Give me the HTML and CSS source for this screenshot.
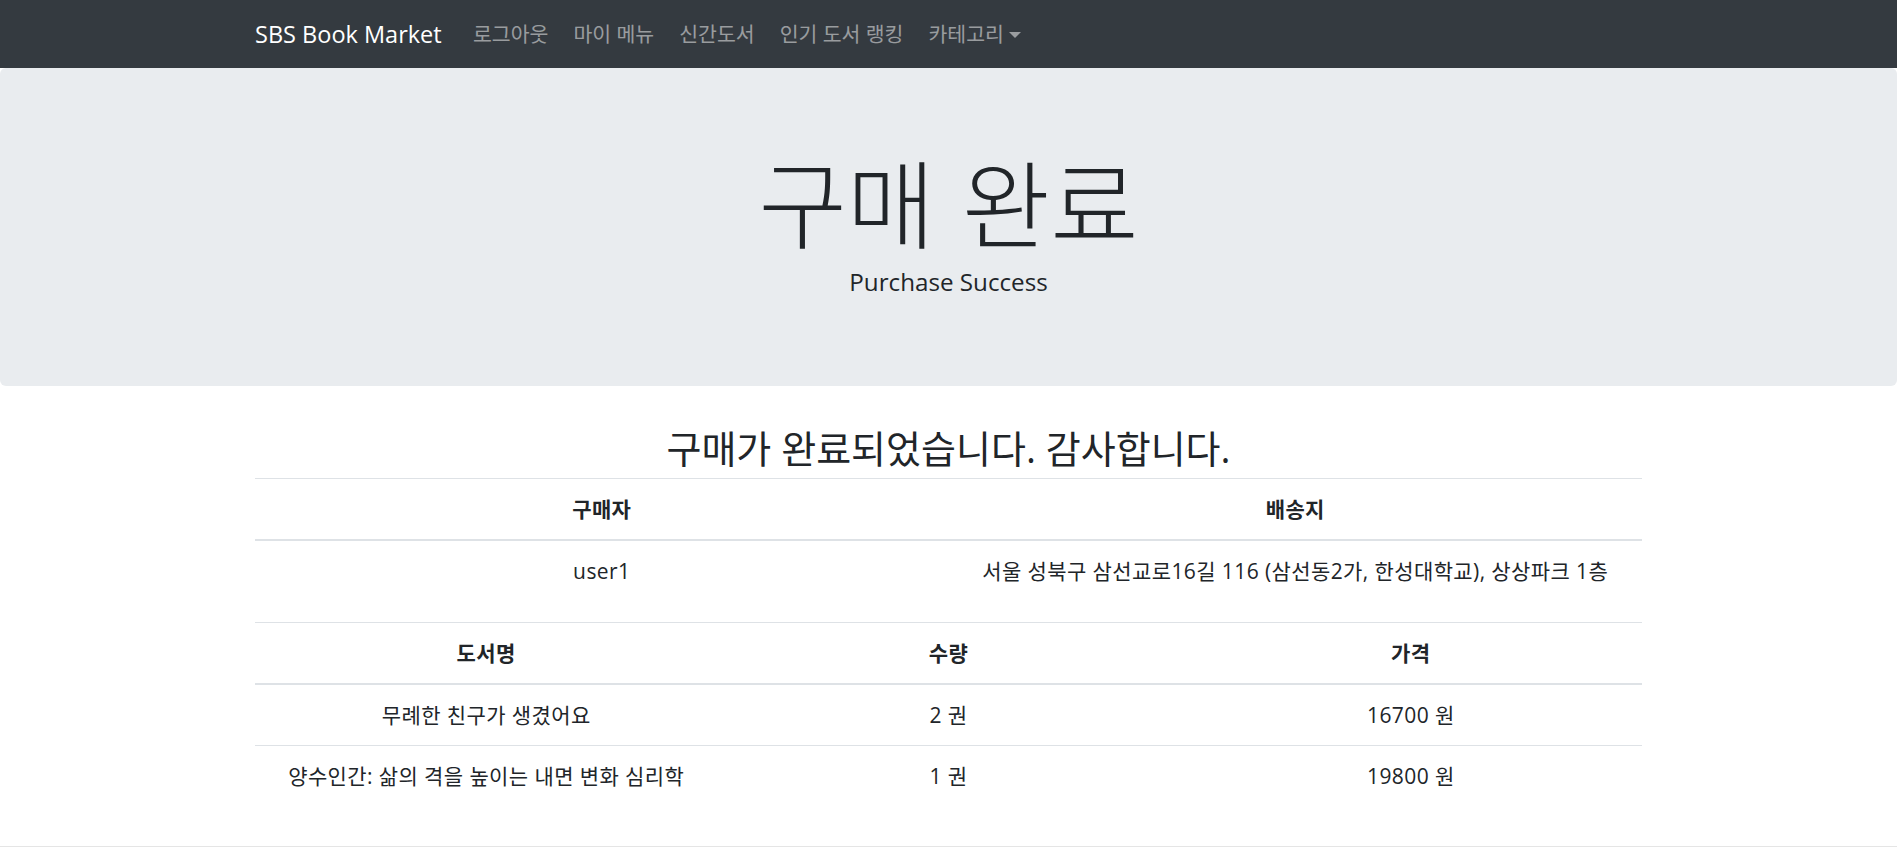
FILE: index.html
```html
<!DOCTYPE html>
<html lang="ko">
<head>
<meta charset="utf-8">
<title>구매 완료</title>
<link rel="stylesheet" href="styles.css">
</head>
<body>
<nav class="navbar">
  <div class="container nav-inner">
    <a class="brand" href="#">SBS Book Market</a>
    <ul class="nav-links">
      <li><a href="#">로그아웃</a></li>
      <li><a href="#">마이 메뉴</a></li>
      <li><a href="#">신간도서</a></li>
      <li><a href="#">인기 도서 랭킹</a></li>
      <li><a href="#" class="dropdown-toggle">카테고리</a></li>
    </ul>
  </div>
</nav>
<div class="jumbotron">
  <h1 class="display">구매 완료</h1>
  <p class="sub">Purchase Success</p>
</div>
<main class="container">
  <h2 class="thanks">구매가 완료되었습니다. 감사합니다.</h2>
  <table class="table">
    <thead>
      <tr><th>구매자</th><th>배송지</th></tr>
    </thead>
    <tbody>
      <tr><td>user1</td><td>서울 성북구 삼선교로16길 116 (삼선동2가, 한성대학교), 상상파크 1층</td></tr>
    </tbody>
  </table>
  <table class="table">
    <thead>
      <tr><th>도서명</th><th>수량</th><th>가격</th></tr>
    </thead>
    <tbody>
      <tr><td>무례한 친구가 생겼어요</td><td>2 권</td><td>16700 원</td></tr>
      <tr><td>양수인간: 삶의 격을 높이는 내면 변화 심리학</td><td>1 권</td><td>19800 원</td></tr>
    </tbody>
  </table>
</main>
<footer class="footer">
  <hr class="divider">
</footer>
</body>
</html>
```

FILE: styles.css
```css
* { box-sizing: border-box; }
html, body { margin: 0; padding: 0; }
body {
  font-family: "Open Sans", "Noto Sans CJK KR", sans-serif;
  font-size: 20px;
  color: #212529;
  background: #fff;
}
.container { max-width: 1387px; margin: 0 auto; }

/* navbar */
.navbar { background: #343a40; height: 68px; }
.nav-inner { display: flex; align-items: center; height: 100%; }
.brand {
  color: #fff;
  text-decoration: none;
  font-size: 23.5px;
  white-space: nowrap;
  width: 188px;
  margin-right: 17.5px;
}
.nav-links { display: flex; list-style: none; margin: 0; padding: 0; }
.nav-links a {
  display: block;
  padding: 0 12.5px;
  color: rgba(255, 255, 255, 0.5);
  text-decoration: none;
  font-size: 20.5px;
  line-height: 30px;
  white-space: nowrap;
}
.dropdown-toggle::after {
  content: "";
  display: inline-block;
  margin-left: 5px;
  vertical-align: 4px;
  border-top: 6px solid;
  border-right: 6px solid transparent;
  border-left: 6px solid transparent;
}

/* jumbotron */
.jumbotron {
  background: #e9ecef;
  border-radius: 6px;
  padding: 83px 32px 90px;
  margin-bottom: 38.5px;
  text-align: center;
}
.display {
  margin: 0;
  font-family: "Liberation Sans", "Noto Sans CJK KR", sans-serif;
  font-size: 96px;
  font-weight: 300;
  line-height: 113px;
}
.sub {
  margin: 3px 0 0;
  font-size: 24.2px;
  line-height: 29px;
}

/* content */
.thanks {
  margin: 0 0 7.5px;
  text-align: center;
  font-size: 38px;
  font-weight: 400;
  line-height: 46px;
}
.table {
  width: 100%;
  border-collapse: collapse;
  table-layout: fixed;
  margin-bottom: 21px;
}
.table th, .table td {
  padding: 15px 12px;
  line-height: 30px;
  font-size: 21px;
  letter-spacing: 0.4px;
  text-align: center;
  vertical-align: top;
  border-top: 1px solid #dee2e6;
}
.table thead th {
  font-weight: 700;
  border-bottom: 2px solid #dee2e6;
}

/* footer */
.divider {
  margin: 40px 0 0;
  border: 0;
  border-top: 1px solid rgba(0, 0, 0, 0.1);
}
```
